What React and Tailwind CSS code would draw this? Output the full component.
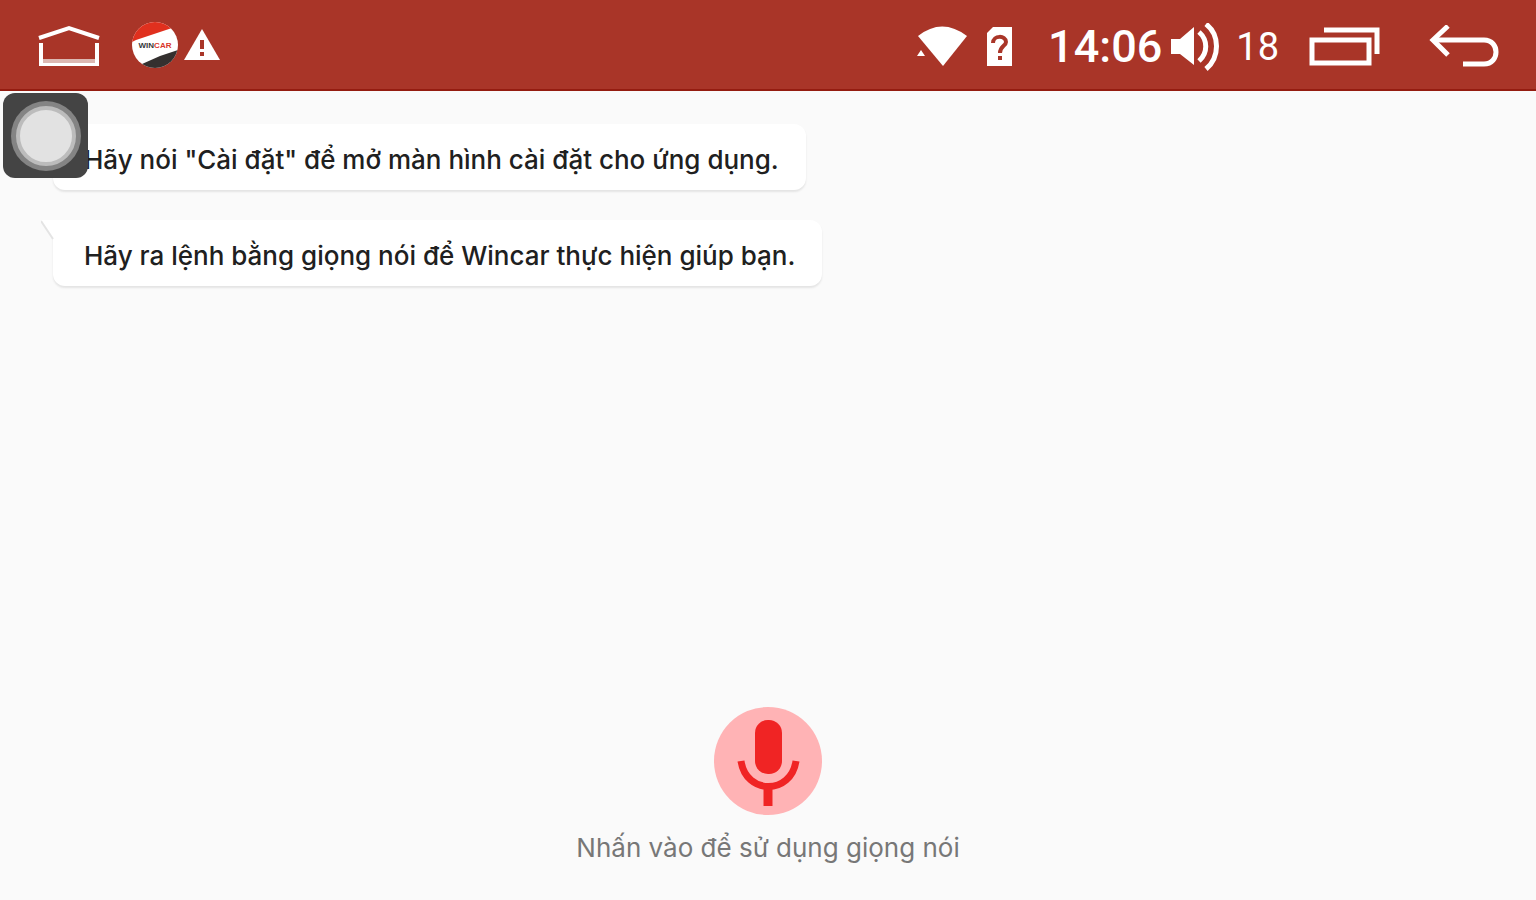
import { useState } from "react";

const messages = [
    'Hãy nói "Cài đặt" để mở màn hình cài đặt cho ứng dụng.',
    "Hãy ra lệnh bằng giọng nói để Wincar thực hiện giúp bạn.",
];

const HomeIcon = () => (
    <svg width="62" height="44" viewBox="0 0 62 44" fill="none" stroke="currentColor" strokeWidth="4">
        <path d="M1 15 L31 5 L61 15" />
        <path d="M3 20 V41 H59 V20" />
        <path d="M5 38 H57" stroke="#dcb8b2" strokeWidth="4" />
    </svg>
);

const WincarLogo = () => (
    <svg width="46" height="46" viewBox="0 0 46 46">
        <clipPath id="logo-clip">
            <circle cx="23" cy="23" r="23" />
        </clipPath>
        <g clipPath="url(#logo-clip)">
            <rect width="46" height="46" fill="#ffffff" />
            <path d="M0 0 H46 V4 L4 18 L0 20 Z" fill="#e0301e" />
            <path d="M10 42 L28 34 L46 28 V46 H10 Z" fill="#34302f" />
            <text x="23" y="26" textAnchor="middle" fontFamily="Liberation Sans, sans-serif" fontSize="8" fontWeight="700">
                <tspan fill="#35383a">WIN</tspan>
                <tspan fill="#d9362a">CAR</tspan>
            </text>
        </g>
    </svg>
);

const WarningIcon = () => (
    <svg width="36" height="32" viewBox="0 0 36 32">
        <path d="M18 0 L36 31 H0 Z" fill="currentColor" />
        <path d="M18 11 V20 M18 23 V27" stroke="#a93528" strokeWidth="4" />
    </svg>
);

const WifiIcon = () => (
    <svg width="52" height="42" viewBox="0 0 52 42" fill="currentColor">
        <path d="M2 10 Q26 -9 51 10 L27 40 Z" />
        <path d="M1 30 L5 24 L9 30 Z" />
    </svg>
);

const SimIcon = () => (
    <svg width="26" height="42" viewBox="0 0 26 42" fill="none">
        <path d="M7 1 H26 V40 H1 V7 Z" fill="currentColor" />
        <path
            d="M7 17 C7 9 20 9 20 16 C20 20 14 20 14 27"
            stroke="#a93528"
            strokeWidth="4"
        />
        <path d="M14 30 V34" stroke="#a93528" strokeWidth="4" />
    </svg>
);

const VolumeIcon = () => (
    <svg width="50" height="48" viewBox="0 0 50 48" fill="none">
        <path d="M1 16 H10 L24 4 V42 L10 31 H1 Z" fill="currentColor" />
        <path d="M29 9 C38 17 38 30 29 38" stroke="currentColor" strokeWidth="5" />
        <path d="M36 1 C50 12 50 34 36 46" stroke="currentColor" strokeWidth="5" />
    </svg>
);

const RecentsIcon = () => (
    <svg width="72" height="40" viewBox="0 0 72 40" fill="none" stroke="currentColor" strokeWidth="5">
        <rect x="3" y="13" width="57" height="23" />
        <path d="M15 3 H68 V27" />
    </svg>
);

const BackIcon = () => (
    <svg width="70" height="44" viewBox="0 0 70 44" fill="none" stroke="currentColor" strokeWidth="5">
        <path d="M19 1 L4 15 L19 30" />
        <path d="M4 15 H55 C71 15 71 39 55 39 H34" />
    </svg>
);

const MicIcon = () => (
    <svg width="108" height="108" viewBox="0 0 108 108" fill="none">
        <rect x="41" y="13" width="27" height="54" rx="13" fill="#f02424" />
        <path d="M27 54 C32 88 77 88 82 54" stroke="#f02424" strokeWidth="7" />
        <path d="M54 80 V99" stroke="#f02424" strokeWidth="9" />
    </svg>
);

const StatusBar = () => (
    <header className="flex h-[91px] items-center justify-between border-b-2 border-[#941c10] bg-[#a93528] pr-[37px] pl-[38px] text-white">
        <div className="flex items-center">
            <button type="button" aria-label="Home" className="mr-8">
                <HomeIcon />
            </button>
            <div className="flex items-center gap-1.5">
                <WincarLogo />
                <WarningIcon />
            </div>
        </div>
        <div className="flex items-center pt-1">
            <WifiIcon />
            <div className="mr-9 ml-[18px]">
                <SimIcon />
            </div>
            <time className="mr-2 font-[Roboto,sans-serif] text-[45px] leading-none font-medium">14:06</time>
            <VolumeIcon />
            <span className="mx-4 font-[Roboto,sans-serif] text-[38px] leading-none">18</span>
            <button type="button" aria-label="Recent apps" className="mr-12 ml-3.5">
                <RecentsIcon />
            </button>
            <button type="button" aria-label="Back">
                <BackIcon />
            </button>
        </div>
    </header>
);

const Bubble = ({ text }) => (
    <li className="relative rounded-xl rounded-tl-none bg-white pt-[18px] pr-[27px] pb-3 pl-[31px] text-[26px] leading-9 font-medium text-[#202020] shadow-[0_2px_2px_#e4e4e4]">
        {/* tail */}
        <svg className="absolute top-0 -left-3" width="13" height="20" viewBox="0 0 13 20">
            <path d="M0 0 H13 V20 Z" fill="#ffffff" />
            <path d="M0 1 L12 19" stroke="#e4e4e4" strokeWidth="2" />
        </svg>
        {text}
    </li>
);

const App = () => {
    const [isListening, setIsListening] = useState(false);

    return (
        <div className="relative flex min-h-screen flex-col bg-[#fafafa] font-[Inter,sans-serif]">
            <StatusBar />

            {/* FLOATING TOUCH BUTTON */}
            <button
                type="button"
                aria-label="Assistive touch"
                className="absolute top-[93px] left-[3px] z-10 flex size-[85px] items-center justify-center rounded-xl bg-[#444444]"
            >
                <span className="flex size-[70px] items-center justify-center rounded-full bg-[#848484]">
                    <span className="size-[60px] rounded-full border-4 border-[#bcbcbc] bg-[#e2e2e2]" />
                </span>
            </button>

            <main className="flex flex-1 flex-col justify-between pt-[33px] pb-[34px]">
                <ul className="flex flex-col items-start gap-[30px] pl-[53px]">
                    {messages.map((text) => (
                        <Bubble key={text} text={text} />
                    ))}
                </ul>

                {/* VOICE INPUT */}
                <div className="flex flex-col items-center gap-[15px]">
                    <button
                        type="button"
                        aria-labelledby="mic-hint"
                        aria-pressed={isListening}
                        onClick={() => setIsListening(!isListening)}
                        className="rounded-full bg-[#ffb3b5]"
                    >
                        <MicIcon />
                    </button>
                    <p id="mic-hint" className="text-[26px] leading-9 text-[#777777]">
                        Nhấn vào để sử dụng giọng nói
                    </p>
                </div>
            </main>
        </div>
    );
};

export default App;
